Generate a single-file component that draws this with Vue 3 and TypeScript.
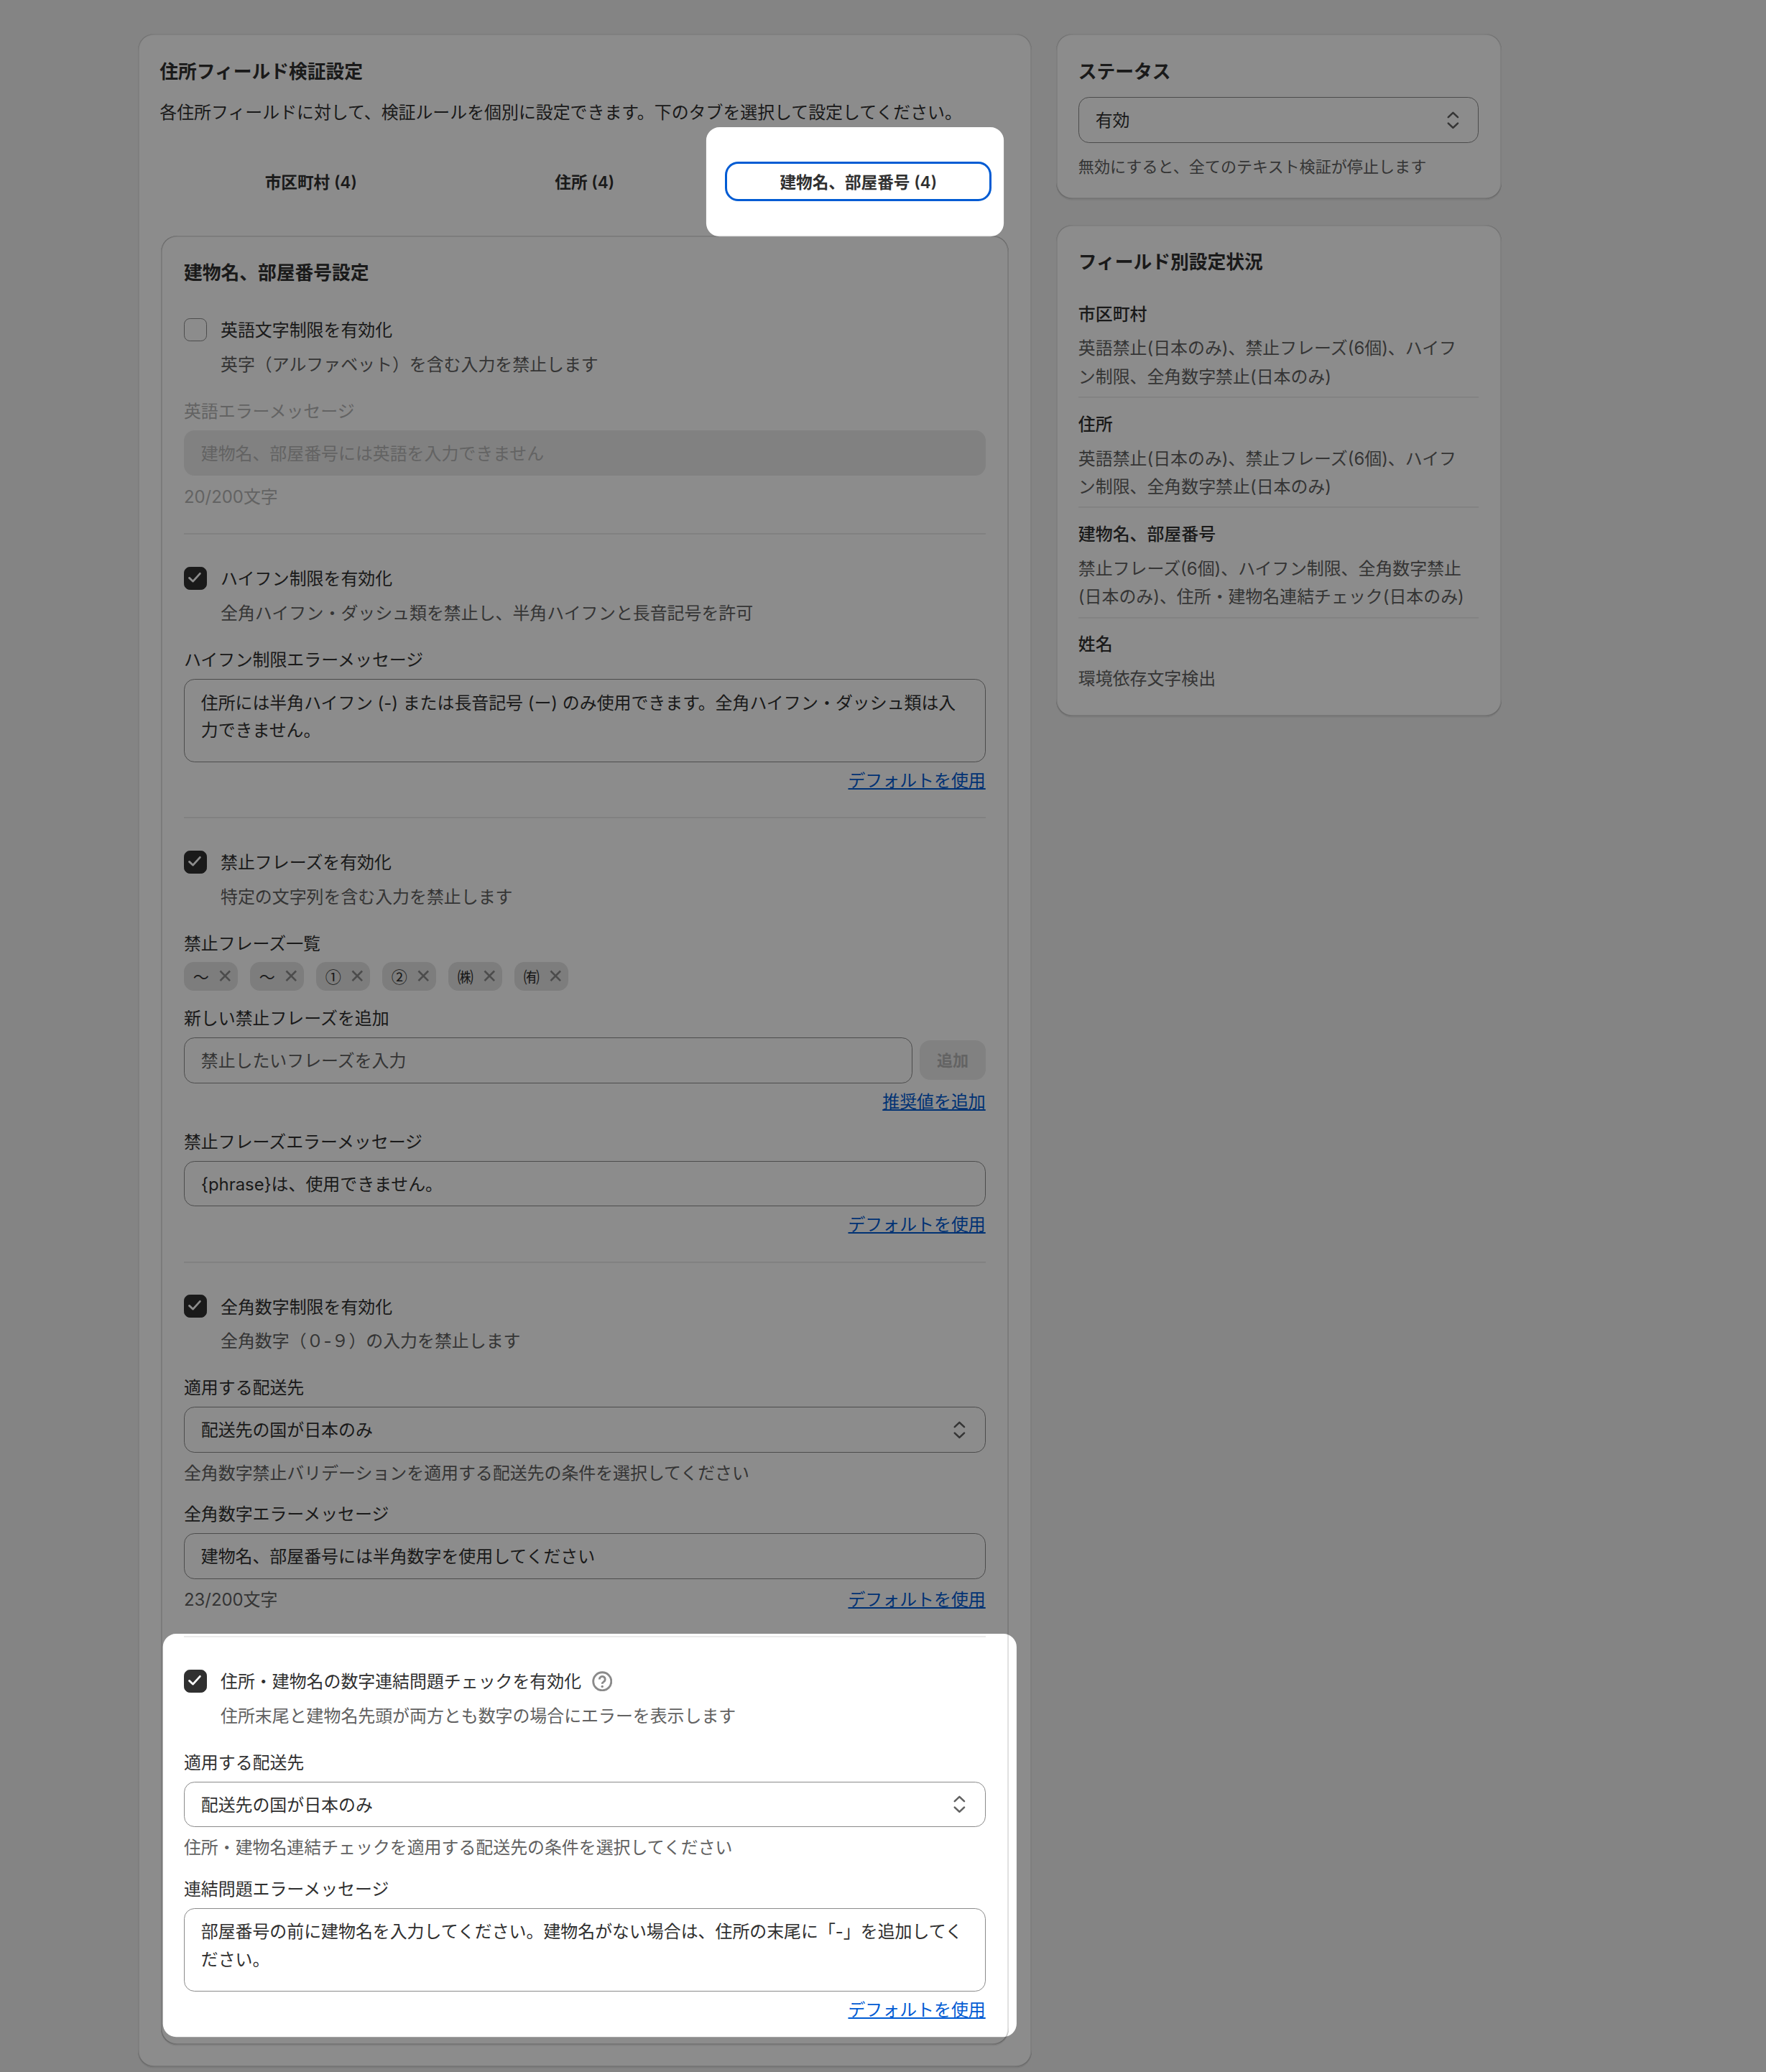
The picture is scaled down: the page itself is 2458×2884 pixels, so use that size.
<script setup lang="ts">
const tabs = [
  { label: '市区町村 (4)', active: false },
  { label: '住所 (4)', active: false },
  { label: '建物名、部屋番号 (4)', active: true },
]
const tags = ['〜', '〜', '①', '②', '㈱', '㈲']
const fields = [
  { name: '市区町村', text: '英語禁止(日本のみ)、禁止フレーズ(6個)、ハイフ\nン制限、全角数字禁止(日本のみ)' },
  { name: '住所', text: '英語禁止(日本のみ)、禁止フレーズ(6個)、ハイフ\nン制限、全角数字禁止(日本のみ)' },
  { name: '建物名、部屋番号', text: '禁止フレーズ(6個)、ハイフン制限、全角数字禁止\n(日本のみ)、住所・建物名連結チェック(日本のみ)' },
  { name: '姓名', text: '環境依存文字検出' },
]
function roundRect(x0: number, y0: number, x1: number, y1: number, r: number): string {
  return `M${x0 + r} ${y0}H${x1 - r}A${r} ${r} 0 0 1 ${x1} ${y0 + r}V${y1 - r}A${r} ${r} 0 0 1 ${x1 - r} ${y1}H${x0 + r}A${r} ${r} 0 0 1 ${x0} ${y1 - r}V${y0 + r}A${r} ${r} 0 0 1 ${x0 + r} ${y0}Z`
}
const W = 1336
const H = 1567.4
const dimPath = `M0 0H${W}V${H}H0Z` + roundRect(534.2, 96.2, 759.3, 178.9, 10) + roundRect(123.2, 1235.9, 769, 1540.9, 10)
</script>

<template>
  <div class="page">
    <main class="card main">
      <h2 class="title">住所フィールド検証設定</h2>
      <p class="lead">各住所フィールドに対して、検証ルールを個別に設定できます。下のタブを選択して設定してください。</p>
      <div class="tabs">
        <button v-for="t in tabs" :key="t.label" class="tab" :class="{ active: t.active }">{{ t.label }}</button>
      </div>

      <section class="inner">
        <h3 class="title">建物名、部屋番号設定</h3>

        <div class="rule">
          <div class="check-row">
            <span class="box"></span>
            <span>英語文字制限を有効化</span>
          </div>
          <p class="desc">英字（アルファベット）を含む入力を禁止します</p>
          <div class="label first disabled">英語エラーメッセージ</div>
          <div class="field off">建物名、部屋番号には英語を入力できません</div>
          <div class="count disabled">20/200文字</div>
        </div>
        <div class="divider"></div>

        <div class="rule">
          <div class="check-row">
            <span class="box on"><svg viewBox="0 0 17.4 17.4"><polyline points="4.6,8.9 7.4,11.5 12.7,5.6" /></svg></span>
            <span>ハイフン制限を有効化</span>
          </div>
          <p class="desc">全角ハイフン・ダッシュ類を禁止し、半角ハイフンと長音記号を許可</p>
          <div class="label first">ハイフン制限エラーメッセージ</div>
          <div class="area">住所には半角ハイフン (-) または長音記号 (ー) のみ使用できます。全角ハイフン・ダッシュ類は入力できません。</div>
          <div class="link-row"><a class="link">デフォルトを使用</a></div>
        </div>
        <div class="divider"></div>

        <div class="rule lower">
          <div class="check-row">
            <span class="box on"><svg viewBox="0 0 17.4 17.4"><polyline points="4.6,8.9 7.4,11.5 12.7,5.6" /></svg></span>
            <span>禁止フレーズを有効化</span>
          </div>
          <p class="desc">特定の文字列を含む入力を禁止します</p>
          <div class="label first">禁止フレーズ一覧</div>
          <div class="tags">
            <span v-for="(t, i) in tags" :key="i" class="tag">
              <span class="tag-text">{{ t }}</span>
              <svg class="tag-x" viewBox="0 0 9 9"><path d="M.8.8L8.2 8.2M8.2.8L.8 8.2" /></svg>
            </span>
          </div>
          <div class="label after-tags">新しい禁止フレーズを追加</div>
          <div class="add-row">
            <div class="field placeholder grow">禁止したいフレーズを入力</div>
            <button class="add">追加</button>
          </div>
          <div class="link-row"><a class="link">推奨値を追加</a></div>
          <div class="label tight">禁止フレーズエラーメッセージ</div>
          <div class="field">{phrase}は、使用できません。</div>
          <div class="link-row"><a class="link">デフォルトを使用</a></div>
        </div>
        <div class="divider"></div>

        <div class="rule lower">
          <div class="check-row">
            <span class="box on"><svg viewBox="0 0 17.4 17.4"><polyline points="4.6,8.9 7.4,11.5 12.7,5.6" /></svg></span>
            <span>全角数字制限を有効化</span>
          </div>
          <p class="desc">全角数字（０-９）の入力を禁止します</p>
          <div class="label first">適用する配送先</div>
          <div class="field select">
            <span>配送先の国が日本のみ</span>
            <svg class="chev" viewBox="0 0 20 20"><path d="M6.4 7.7L10 4.3L13.6 7.7M6.4 12.3L10 15.7L13.6 12.3" /></svg>
          </div>
          <p class="help">全角数字禁止バリデーションを適用する配送先の条件を選択してください</p>
          <div class="label next">全角数字エラーメッセージ</div>
          <div class="field">建物名、部屋番号には半角数字を使用してください</div>
          <div class="count-row">
            <span class="muted">23/200文字</span>
            <a class="link">デフォルトを使用</a>
          </div>
        </div>
        <div class="divider"></div>

        <div class="rule lower last">
          <div class="check-row">
            <span class="box on"><svg viewBox="0 0 17.4 17.4"><polyline points="4.6,8.9 7.4,11.5 12.7,5.6" /></svg></span>
            <span>住所・建物名の数字連結問題チェックを有効化</span>
            <svg class="q" viewBox="0 0 20 20">
              <circle cx="10" cy="10" r="8.8" />
              <path d="M7.2 8a2.8 2.8 0 1 1 4.4 2.3c-1 .7-1.6 1.2-1.6 2.2" />
              <circle class="dot" cx="10" cy="15" r="1.2" />
            </svg>
          </div>
          <p class="desc">住所末尾と建物名先頭が両方とも数字の場合にエラーを表示します</p>
          <div class="label first">適用する配送先</div>
          <div class="field select">
            <span>配送先の国が日本のみ</span>
            <svg class="chev" viewBox="0 0 20 20"><path d="M6.4 7.7L10 4.3L13.6 7.7M6.4 12.3L10 15.7L13.6 12.3" /></svg>
          </div>
          <p class="help">住所・建物名連結チェックを適用する配送先の条件を選択してください</p>
          <div class="label next">連結問題エラーメッセージ</div>
          <div class="area">部屋番号の前に建物名を入力してください。建物名がない場合は、住所の末尾に「-」を追加してください。</div>
          <div class="link-row"><a class="link">デフォルトを使用</a></div>
        </div>
      </section>
    </main>

    <aside class="side">
      <section class="card status">
        <h2 class="title">ステータス</h2>
        <div class="field select">
          <span>有効</span>
          <svg class="chev" viewBox="0 0 20 20"><path d="M6.4 7.7L10 4.3L13.6 7.7M6.4 12.3L10 15.7L13.6 12.3" /></svg>
        </div>
        <p class="small">無効にすると、全てのテキスト検証が停止します</p>
      </section>
      <section class="card state">
        <h2 class="title">フィールド別設定状況</h2>
        <div v-for="(f, i) in fields" :key="f.name" class="state-item" :class="{ ruled: i > 0 }">
          <div class="state-name">{{ f.name }}</div>
          <p class="state-text">{{ f.text }}</p>
        </div>
      </section>
    </aside>

    <svg class="dim" :viewBox="`0 0 ${W} ${H}`" preserveAspectRatio="none">
      <path :d="dimPath" fill-rule="evenodd" />
    </svg>
  </div>
</template>

<style scoped>
.page {
  zoom: 1.84;
  position: relative;
  box-sizing: border-box;
  width: 1336px;
  height: 1567.39px;
  overflow: hidden;
  display: flex;
  align-items: flex-start;
  gap: 18.4px;
  padding: 25.8px 0 0 104.3px;
  background: #f1f1f1;
  color: #303030;
  font-family: Inter, "Noto Sans CJK JP", sans-serif;
  font-size: 13px;
  line-height: 20px;
}
.card {
  box-sizing: border-box;
  background: #fff;
  border-radius: 12px;
  box-shadow: 0 1px 0 0 rgba(26, 26, 26, 0.07), inset 1px 0 0 0 rgba(0, 0, 0, 0.1), inset -1px 0 0 0 rgba(0, 0, 0, 0.1), inset 0 -1px 0 0 rgba(0, 0, 0, 0.17), inset 0 1px 0 0 rgba(204, 204, 204, 0.5);
}
.main {
  width: 676px;
  padding: 17.8px 16.5px 17px;
}
.title,
.lead,
.desc,
.label,
.state-name {
  box-sizing: border-box;
  height: 20px;
  padding-top: 0.9px;
}
.title {
  margin: 0;
  font-size: 14px;
  line-height: 20px;
  font-weight: 600;
}
p {
  margin: 0;
}
.lead {
  margin-top: 11px;
}
.tabs {
  display: flex;
  gap: 5.6px;
  margin: 27.7px 13.7px 0 13.7px;
}
.tab {
  flex: 1;
  box-sizing: border-box;
  height: 30px;
  padding: 2px 0 0;
  border: 2px solid transparent;
  border-radius: 10px;
  background: transparent;
  color: #303030;
  font: inherit;
  font-size: 12.3px;
  font-weight: 600;
}
.tab.active {
  border-color: #005bd3;
}
.inner {
  box-sizing: border-box;
  margin: 25.8px 0.9px 0;
  padding: 18px 17.4px 15.8px;
  border-radius: 12px;
  box-shadow: 0 1px 0 0 rgba(26, 26, 26, 0.07), inset 1px 0 0 0 rgba(0, 0, 0, 0.13), inset -1px 0 0 0 rgba(0, 0, 0, 0.13), inset 0 -1px 0 0 rgba(0, 0, 0, 0.17), inset 0 1px 0 0 rgba(0, 0, 0, 0.13);
}
.rule {
  padding: 23.4px 0 17.2px;
}
.rule.lower {
  padding-top: 23px;
}
.rule.last {
  padding-bottom: 0;
}
.divider {
  height: 1px;
  background: #ebebeb;
}
.check-row {
  display: flex;
  align-items: center;
  height: 20px;
}
.check-row > span:not(.box) {
  padding-top: 1.8px;
}
.box {
  flex: none;
  box-sizing: border-box;
  width: 17.4px;
  height: 17.4px;
  margin: 0 10.4px 0 0;
  border: 1px solid #8a8a8a;
  border-radius: 4.5px;
  background: #fff;
}
.box.on {
  border-color: #303030;
  background: #303030;
}
.box svg {
  display: block;
  width: 17.4px;
  height: 17.4px;
  margin: -1px;
}
.box polyline {
  fill: none;
  stroke: #fff;
  stroke-width: 1.5;
  stroke-linecap: round;
  stroke-linejoin: round;
}
.q {
  width: 15.5px;
  height: 15.5px;
  margin-left: 8px;
  fill: none;
  stroke: #8a8a8a;
  stroke-width: 2;
}
.q .dot {
  fill: #8a8a8a;
  stroke: none;
}
.desc {
  margin: 6px 0 0 27.8px;
  color: #616161;
}
.label.first {
  margin-top: 15.3px;
}
.label.next {
  margin-top: 10.4px;
}
.label.tight {
  margin-top: 9.6px;
}
.label.after-tags {
  margin-top: 10.8px;
}
.disabled {
  color: #b5b5b5;
}
.field {
  box-sizing: border-box;
  display: flex;
  align-items: center;
  height: 34.6px;
  margin-top: 4.7px;
  padding: 1.8px 12.4px 0;
  border: 1px solid #8a8a8a;
  border-radius: 8px;
  background: #fff;
}
.field.off {
  border-color: transparent;
  background: #ebebeb;
  color: #b5b5b5;
}
.field.placeholder {
  color: #616161;
}
.grow {
  flex: 1;
}
.area {
  box-sizing: border-box;
  height: 63px;
  margin-top: 4.7px;
  padding: 7.4px 12.4px 0;
  border: 1px solid #8a8a8a;
  border-radius: 8px;
  line-height: 21px;
}
.select {
  justify-content: space-between;
  padding-right: 9.2px;
}
.chev {
  width: 20px;
  height: 20px;
  margin-top: -1.8px;
  fill: none;
  stroke: #616161;
  stroke-width: 1.4;
  stroke-linecap: round;
  stroke-linejoin: round;
}
.count {
  margin-top: 6px;
}
.link-row {
  display: flex;
  justify-content: flex-end;
  margin-top: 4.4px;
}
.count-row {
  display: flex;
  justify-content: space-between;
  margin-top: 6px;
}
.muted,
.help {
  color: #616161;
}
.help {
  margin-top: 6px;
}
.link {
  color: #005bd3;
  text-decoration: underline;
}
.tags {
  display: flex;
  gap: 9px;
  margin-top: 4.2px;
}
.tag {
  box-sizing: border-box;
  display: flex;
  align-items: center;
  width: 41px;
  height: 21.6px;
  padding-left: 7px;
  border-radius: 7.5px;
  background: #e3e3e3;
  font-family: "Noto Sans CJK JP", sans-serif;
  font-size: 12px;
}
.tag-text {
  width: 12px;
  text-align: center;
}
.tag-x {
  flex: none;
  width: 9px;
  height: 9px;
  margin-left: 7.5px;
  fill: none;
  stroke: #8a8a8a;
  stroke-width: 1.4;
}
.add-row {
  display: flex;
  align-items: center;
  gap: 5.5px;
}
.add {
  flex: none;
  width: 49.6px;
  height: 30px;
  margin-top: 4.7px;
  padding: 1px 0 0;
  border: 0;
  border-radius: 8px;
  background: #ebebeb;
  color: #b5b5b5;
  font: inherit;
  font-size: 12px;
  font-weight: 600;
}
.side {
  width: 337px;
  display: flex;
  flex-direction: column;
  gap: 19.5px;
}
.status {
  padding: 17.8px 17px 14.5px;
}
.status .field {
  margin-top: 9.9px;
}
.small {
  margin-top: 8px;
  font-size: 12px;
  color: #616161;
}
.state {
  padding: 17.6px 17px 17.4px;
}
.state-item {
  padding-bottom: 4.2px;
}
.state-item:first-of-type {
  margin-top: 19.5px;
}
.state-item.ruled {
  padding-top: 10.4px;
  box-shadow: inset 0 1px 0 #ebebeb;
}
.state-item:last-child {
  padding-bottom: 0;
}
.state-name {
  font-weight: 550;
}
.state-text {
  margin-top: 5.7px;
  color: #616161;
  line-height: 21.5px;
  white-space: pre-line;
}
.dim {
  position: absolute;
  inset: 0;
  width: 100%;
  height: 100%;
  pointer-events: none;
}
.dim path {
  fill: rgba(0, 0, 0, 0.45);
}
</style>

<style>
html,
body {
  margin: 0;
  background: #f1f1f1;
}
</style>
